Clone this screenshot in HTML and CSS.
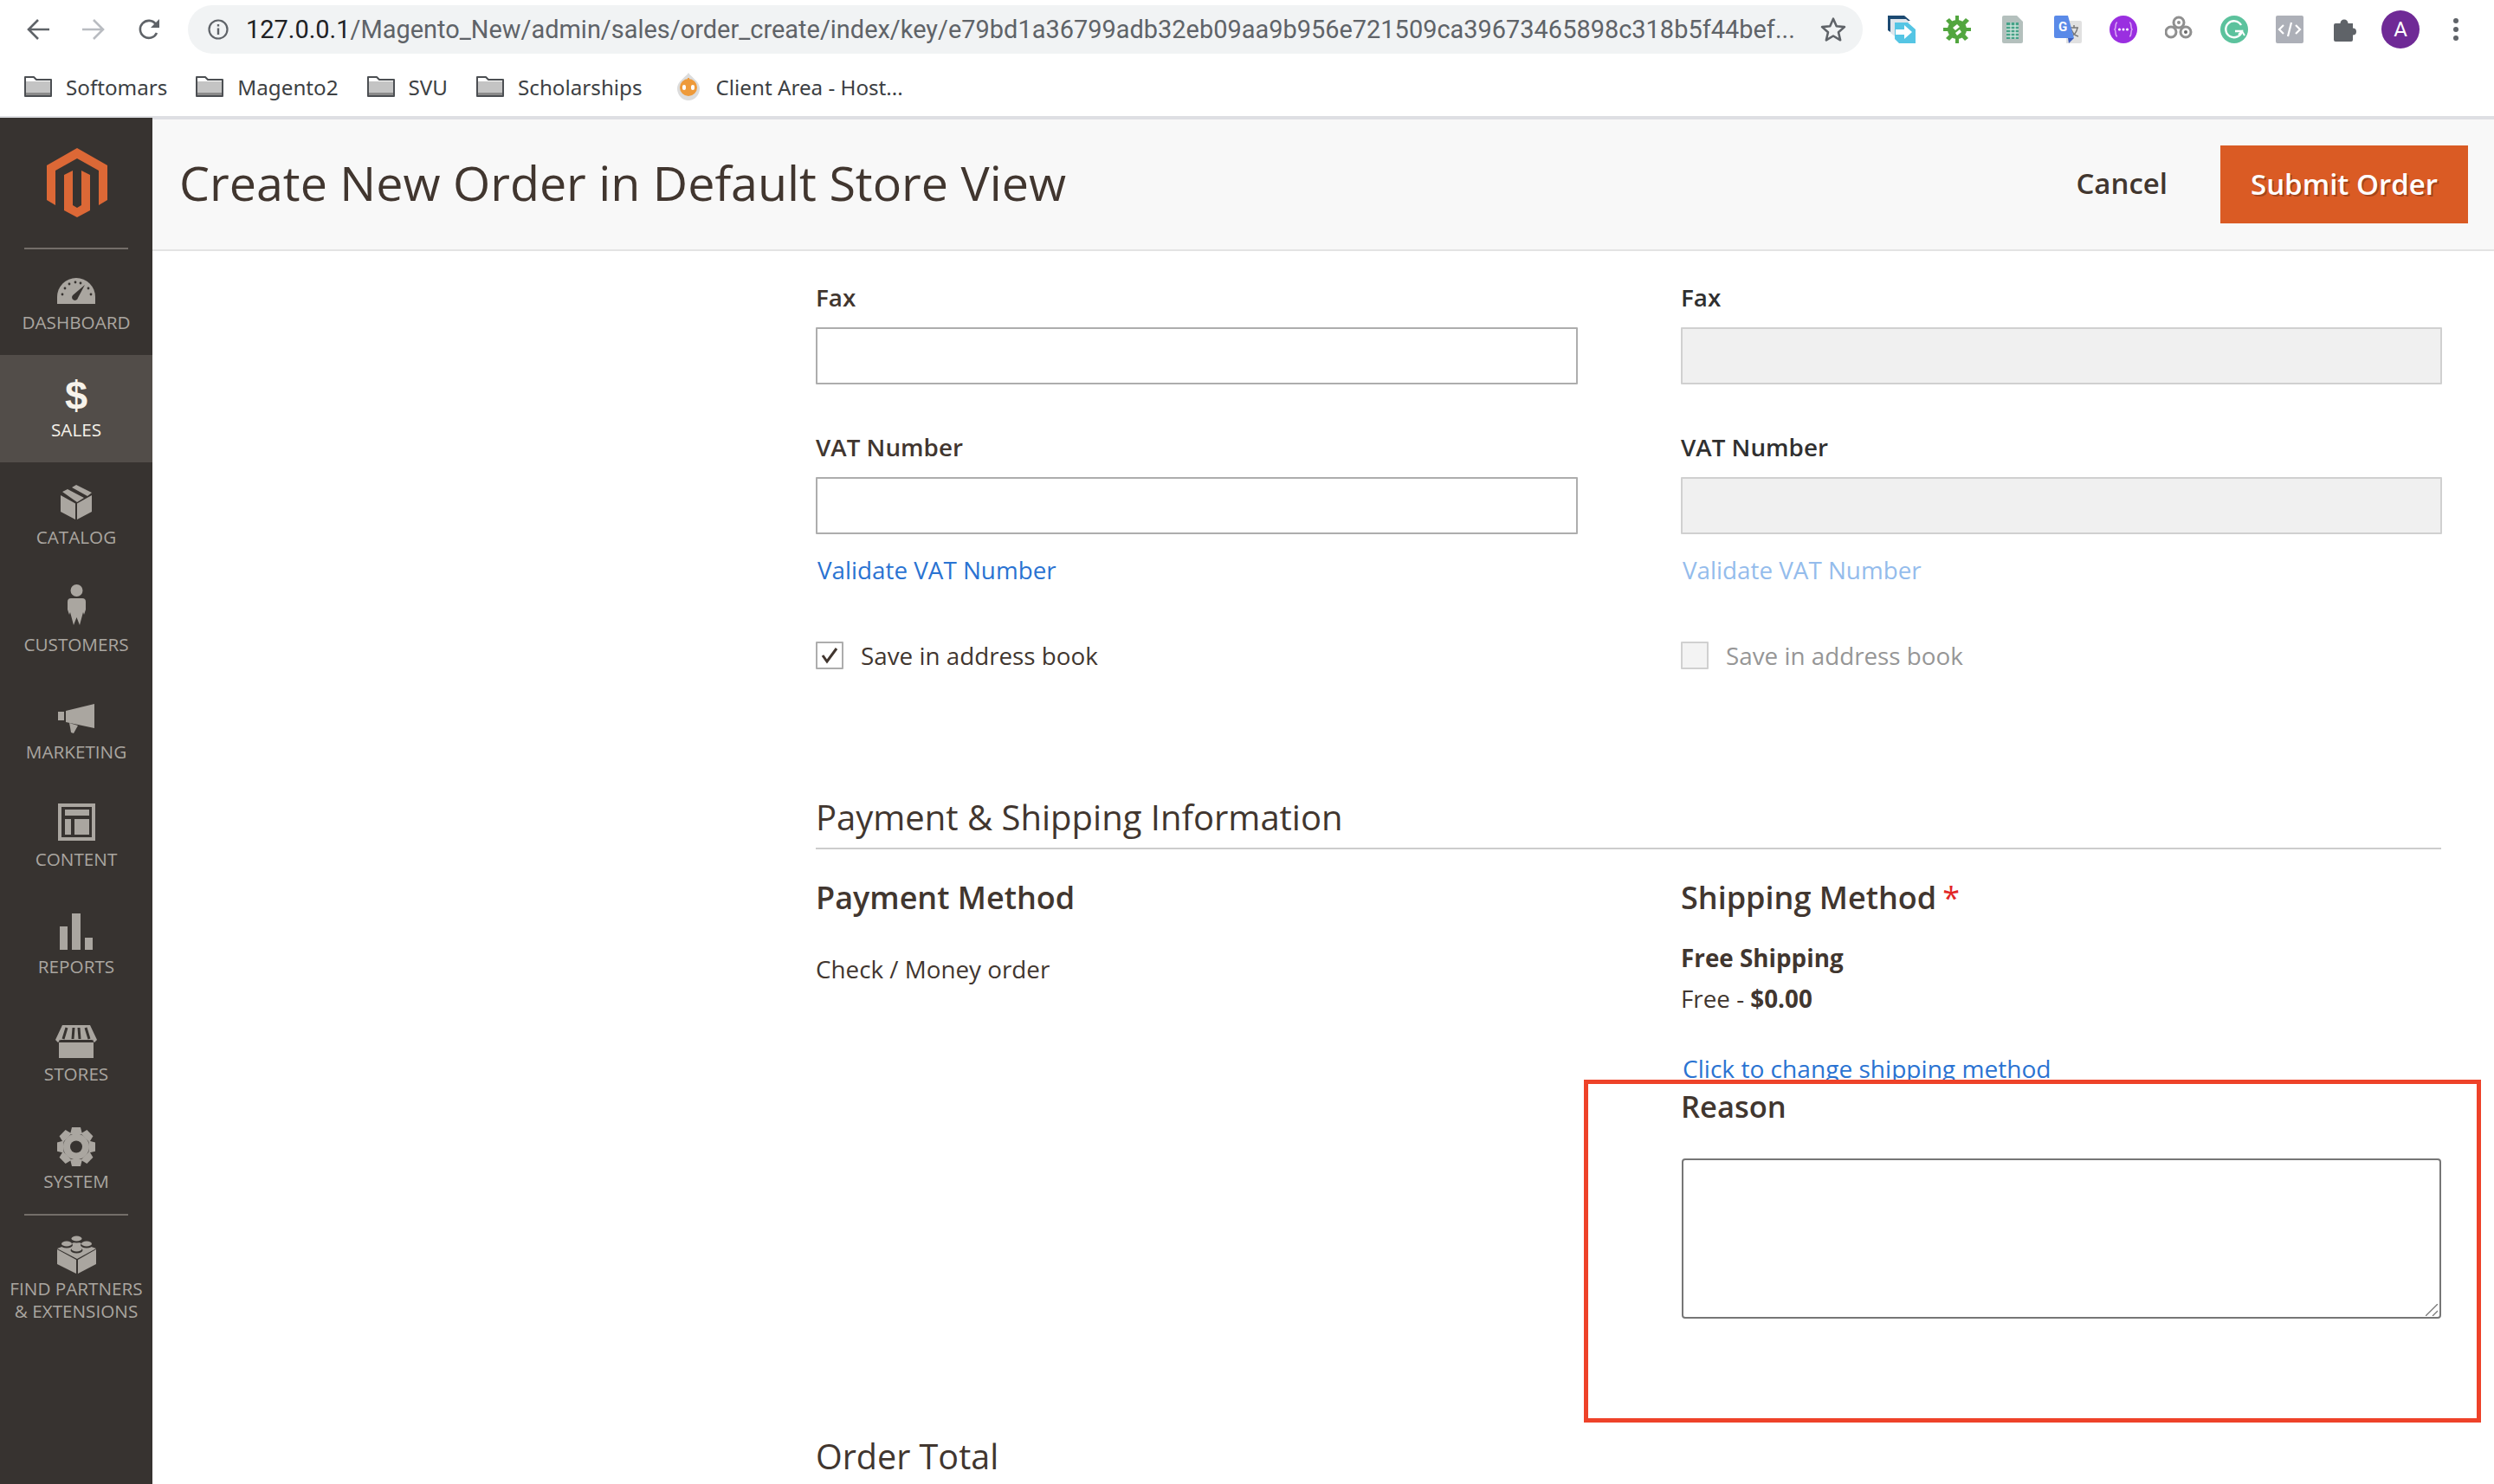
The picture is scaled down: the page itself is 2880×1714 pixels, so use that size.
FILE: index.html
```html
<!DOCTYPE html>
<html lang="en">
<head>
    <meta charset="UTF-8">
    <title>Create New Order in Default Store View</title>
    <link rel="stylesheet" href="styles.css">
</head>
<body>
    <div class="browser-bar">
        <div class="nav-buttons">
            <svg class="nav-icon" viewBox="0 0 26 24"><path d="M13 1 2 12l11 11M2 12h24" fill="none" stroke="#5f6368" stroke-width="2.6"/></svg>
            <svg class="nav-icon" viewBox="0 0 26 24"><path d="M13 1l11 11-11 11M24 12H0" fill="none" stroke="#b9bcc1" stroke-width="2.6"/></svg>
            <svg class="nav-icon" viewBox="0 0 26 24"><path d="M22 16a10 10 0 1 1-1-10" fill="none" stroke="#5f6368" stroke-width="2.6"/><path d="M25 0v10H15z" fill="#5f6368"/></svg>
        </div>
        <div class="url-bar">
            <svg class="info-icon" viewBox="0 0 24 24"><circle cx="12" cy="12" r="10.5" fill="none" stroke="#5f6368" stroke-width="2.2"/><path d="M12 10.5v7.5M12 6v2.6" stroke="#5f6368" stroke-width="2.4"/></svg>
            <div class="url-text"><span class="url-host">127.0.0.1</span>/Magento_New/admin/sales/order_create/index/key/e79bd1a36799adb32eb09aa9b956e721509ca39673465898c318b5f44bef...</div>
            <svg class="star-icon" viewBox="0 0 28 28"><path d="M14 2.5l3.5 8 8.6.8-6.5 5.7 2 8.5L14 21l-7.600 4.5 2-8.5L1.900 11.300l8.600-.8z" fill="none" stroke="#5f6368" stroke-width="2.4" stroke-linejoin="round"/></svg>
        </div>
        <div class="extensions">
            <svg class="ext" viewBox="0 0 32 32"><path d="M0 0h19l7 6H6v15l-6-4z" fill="#1c4a72"/><path d="M3 4h18l5 4H8v16l-5-4z" fill="#dfe6ec"/><path d="M8 8h15l9 8v16H13l-5-5z" fill="#55c5e4"/><path d="M9 16h10v-5l9 8-9 8v-5H9z" fill="#fff"/></svg>
            <svg class="ext" viewBox="0 0 32 32"><g fill="#52a63f"><circle cx="16" cy="16" r="11"/><path d="M14 0h4v32h-4zM0 14h32v4H0z"/><path d="M3 6l4-3 22 23-4 3zM3 26 26 3l4 3L7 29z"/></g><path d="M11 14l5-4 3 3-5 4zM14 20l5-4 2 3-5 4z" fill="#fff"/></svg>
            <svg class="ext ext-narrow" viewBox="0 0 24 32"><path d="M2 0h15l7 7v23a2 2 0 0 1-2 2H2a2 2 0 0 1-2-2V2a2 2 0 0 1 2-2z" fill="#b4c0bd"/><path d="M5 8h14v19H5z" fill="#45a287"/><path d="M5 12h14M5 16h14M5 20h14M5 24h14M10 8v19M15 8v19" stroke="#cfe3dc" stroke-width="1.3"/></svg>
            <svg class="ext" viewBox="0 0 32 32"><path d="M14 6h16a2 2 0 0 1 2 2v22a2 2 0 0 1-2 2H14z" fill="#e1e1e1"/><path d="M18 14h10M23 11v3M27 14c-1 6-5 9-8 10M20 16c1 4 4 7 8 8" fill="none" stroke="#777" stroke-width="1.5"/><path d="M2 0h14l7 26H2a2 2 0 0 1-2-2V2a2 2 0 0 1 2-2z" fill="#5a8ae8"/><path d="M16 26h7l-6 6z" fill="#3f5fbe"/><text class="ext-g" x="5" y="18">G</text></svg>
            <svg class="ext" viewBox="0 0 32 32"><circle cx="16" cy="16" r="16" fill="#9a2fe0"/><path d="M9 8c-3 0-1 6-3 8 2 2 0 8 3 8M23 8c3 0 1 6 3 8-2 2 0 8-3 8" fill="none" stroke="#d9a8f5" stroke-width="1.5"/><circle cx="11.5" cy="16" r="1.5" fill="#fff"/><circle cx="16" cy="16" r="1.5" fill="#fff"/><circle cx="20.5" cy="16" r="1.5" fill="#fff"/></svg>
            <svg class="ext" viewBox="0 0 32 32"><g fill="none" stroke="#8f8f8f" stroke-width="3"><circle cx="16" cy="8" r="6"/><circle cx="7" cy="19" r="6"/><circle cx="24" cy="19" r="6"/></g><circle cx="16" cy="8" r="2" fill="#8f8f8f"/><circle cx="24" cy="19" r="2" fill="#666"/></svg>
            <svg class="ext" viewBox="0 0 32 32"><circle cx="16" cy="16" r="16" fill="#5cc29d"/><path d="M24 11a9.5 9.5 0 1 0 1 7h-8" fill="none" stroke="#fff" stroke-width="2.4"/><path d="M21 22l4-4 3 5" fill="none" stroke="#fff" stroke-width="2"/></svg>
            <svg class="ext" viewBox="0 0 32 32"><rect width="32" height="32" rx="2" fill="#adb0b8"/><path d="M9 11l-5 5 5 5M23 11l5 5-5 5M18 8l-4 16" fill="none" stroke="#fff" stroke-width="2.2"/></svg>
            <svg class="ext-puzzle" viewBox="0 0 28 28"><path d="M2 7h5.500a4.500 4.500 0 1 1 9 0H22v5.500a4 4 0 1 1 0 8V26a2 2 0 0 1-2 2H2a2 2 0 0 1-2-2V9a2 2 0 0 1 2-2z" fill="#5f6368"/></svg>
            <div class="avatar">A</div>
            <div class="kebab"><i></i><i></i><i></i></div>
        </div>
    </div>

    <div class="bookmarks">
        <a class="bookmark"><svg class="folder" viewBox="0 0 32 26"><path d="M1 24V2h10l3 3h17v19z" fill="#fff" stroke="#4c4f53" stroke-width="2" stroke-linejoin="round"/><path d="M2 7h28v16H2z" fill="#c4c4c4"/><path d="M2 20h28v3H2z" fill="#8b8b8b"/></svg>Softomars</a>
        <a class="bookmark"><svg class="folder" viewBox="0 0 32 26"><path d="M1 24V2h10l3 3h17v19z" fill="#fff" stroke="#4c4f53" stroke-width="2" stroke-linejoin="round"/><path d="M2 7h28v16H2z" fill="#c4c4c4"/><path d="M2 20h28v3H2z" fill="#8b8b8b"/></svg>Magento2</a>
        <a class="bookmark"><svg class="folder" viewBox="0 0 32 26"><path d="M1 24V2h10l3 3h17v19z" fill="#fff" stroke="#4c4f53" stroke-width="2" stroke-linejoin="round"/><path d="M2 7h28v16H2z" fill="#c4c4c4"/><path d="M2 20h28v3H2z" fill="#8b8b8b"/></svg>SVU</a>
        <a class="bookmark"><svg class="folder" viewBox="0 0 32 26"><path d="M1 24V2h10l3 3h17v19z" fill="#fff" stroke="#4c4f53" stroke-width="2" stroke-linejoin="round"/><path d="M2 7h28v16H2z" fill="#c4c4c4"/><path d="M2 20h28v3H2z" fill="#8b8b8b"/></svg>Scholarships</a>
        <a class="bookmark bookmark-site"><svg class="robot" viewBox="0 0 28 32"><path d="M14 0c3 5 13 10 13 18 0 8-6 14-13 14S1 26 1 18C1 10 11 5 14 0z" fill="#dcdcdc"/><circle cx="14" cy="17" r="10" fill="#ee9a3a"/><rect x="7" y="14" width="4" height="6" rx="2" fill="#fff"/><rect x="17" y="14" width="4" height="6" rx="2" fill="#fff"/><path d="M14 6v6" stroke="#ee9a3a" stroke-width="2"/></svg>Client Area - Host...</a>
    </div>

    <div class="admin">
        <nav class="sidebar">
            <div class="logo">
                <svg class="logo-mark" viewBox="0 0 70 80"><path d="M35 0l35 20v40l-10 6V26L35 12 10 26v40L0 60V20z" fill="#dc6836"/><path d="M20 31l10-5v40l5 3 5-3V26l10 5v41l-15 8-15-8z" fill="#dc6836"/></svg>
            </div>
            <ul class="menu">
                <li class="menu-item">
                    <div class="menu-icon lift-4"><svg width="44" height="30" viewBox="0 0 44 30"><path d="M0 30v-8a22 22 0 0 1 44 0v8z" fill="currentColor"/><path d="M32 8l-8 15a3.5 3.5 0 1 1-6-3z" fill="#373330"/><g fill="#373330"><circle cx="6" cy="19" r="1.4"/><circle cx="9" cy="12" r="1.4"/><circle cx="14" cy="7" r="1.4"/><circle cx="21" cy="5" r="1.4"/><circle cx="27" cy="6" r="1.4"/><circle cx="36" cy="12" r="1.4"/><circle cx="39" cy="19" r="1.4"/></g></svg></div>
                    <span>Dashboard</span>
                </li>
                <li class="menu-item is-active">
                    <div class="menu-icon"><span class="dollar">$</span></div>
                    <span>Sales</span>
                </li>
                <li class="menu-item">
                    <div class="menu-icon lift-3"><svg width="36" height="40" viewBox="0 0 36 40"><path d="M0 12l17 9.5V40L0 31zM36 12 19 21.5V40l17-9zM13 3l5-3 18 9-5 4zM2 8l6-3 19 10-8 5z" fill="currentColor"/></svg></div>
                    <span>Catalog</span>
                </li>
                <li class="menu-item">
                    <div class="menu-icon lift-5"><svg width="21" height="47" viewBox="0 0 21 47"><circle cx="10.5" cy="7" r="7" fill="currentColor"/><path d="M4 16h13q4 0 4 4v9l-2 6-1-3-4 15-3.5-9L7 47 3 32l-1 3-2-6v-9q0-4 4-4z" fill="currentColor"/></svg></div>
                    <span>Customers</span>
                </li>
                <li class="menu-item">
                    <div class="menu-icon lift-4"><svg width="42" height="34" viewBox="0 0 42 34"><path d="M0 9h7v10H0zM9 8l33-8v28L9 21zM13 22l10 3-5 9-3-1-1-6z" fill="currentColor"/></svg></div>
                    <span>Marketing</span>
                </li>
                <li class="menu-item">
                    <div class="menu-icon lift-4"><svg width="43" height="43" viewBox="0 0 43 43"><path d="M2 2h39v39H2z" fill="none" stroke="currentColor" stroke-width="4"/><path d="M8 7h28v7H8zM8 18h7v18H8zM19 18h17v18H19z" fill="currentColor"/></svg></div>
                    <span>Content</span>
                </li>
                <li class="menu-item">
                    <div class="menu-icon lift-2"><svg width="38" height="42" viewBox="0 0 38 42"><path d="M0 15h9v27H0zM14 0h10v42H14zM29 28h9v14h-9z" fill="currentColor"/></svg></div>
                    <span>Reports</span>
                </li>
                <li class="menu-item">
                    <div class="menu-icon lift-1"><svg width="48" height="38" viewBox="0 0 48 38"><path d="M8 0h32l8 17-3 3-3-3H6l-3 3-3-3z" fill="currentColor"/><path d="M4 20h40v18H4z" fill="currentColor"/><path d="M13 3l-4 13M21 3l-1 13M27 3l1 13M35 3l4 13" stroke="#373330" stroke-width="3"/><path d="M4 18h40" stroke="#373330" stroke-width="1"/></svg></div>
                    <span>Stores</span>
                </li>
                <li class="menu-item">
                    <div class="menu-icon"><svg width="44" height="45" viewBox="0 0 44 45"><g fill="currentColor"><circle cx="22" cy="22.5" r="15"/><path d="M17 0h10l2 8H15z"/><path d="M17 0h10l2 8H15z" transform="rotate(45 22 22.5)"/><path d="M17 0h10l2 8H15z" transform="rotate(90 22 22.5)"/><path d="M17 0h10l2 8H15z" transform="rotate(135 22 22.5)"/><path d="M17 0h10l2 8H15z" transform="rotate(180 22 22.5)"/><path d="M17 0h10l2 8H15z" transform="rotate(225 22 22.5)"/><path d="M17 0h10l2 8H15z" transform="rotate(270 22 22.5)"/><path d="M17 0h10l2 8H15z" transform="rotate(315 22 22.5)"/></g><circle cx="22" cy="22.5" r="7" fill="#373330"/></svg></div>
                    <span>System</span>
                </li>
                <li class="menu-item menu-item-partners">
                    <div class="menu-icon"><svg width="45" height="44" viewBox="0 0 45 44"><path d="M0 16l22 12v16L0 33zM45 16 24 28v16l21-11z" fill="currentColor"/><path d="M22.5 7 45 15 23 27 0 15z" fill="currentColor"/><g fill="#373330"><ellipse cx="22.5" cy="5" rx="7" ry="3.5"/><ellipse cx="11" cy="11" rx="7" ry="3.5"/><ellipse cx="34" cy="11" rx="7" ry="3.5"/><ellipse cx="22.5" cy="17" rx="7" ry="3.5"/></g><g fill="currentColor"><ellipse cx="22.5" cy="3.5" rx="6" ry="3"/><ellipse cx="11" cy="9.5" rx="6" ry="3"/><ellipse cx="34" cy="9.5" rx="6" ry="3"/><ellipse cx="22.5" cy="15.5" rx="6" ry="3"/></g></svg></div>
                    <span>Find Partners<br>&amp; Extensions</span>
                </li>
            </ul>
        </nav>

        <main class="page">
            <header class="page-header">
                <h1>Create New Order in Default Store View</h1>
                <div class="page-actions">
                    <button class="btn-cancel">Cancel</button>
                    <button class="btn-submit">Submit Order</button>
                </div>
            </header>

            <div class="content">
                <div class="two-cols">
                    <div class="address">
                        <div class="field">
                            <label>Fax</label>
                            <input type="text">
                        </div>
                        <div class="field">
                            <label>VAT Number</label>
                            <input type="text">
                        </div>
                        <a class="link validate">Validate VAT Number</a>
                        <div class="save-row">
                            <span class="check"><svg width="22" height="20" viewBox="0 0 22 20"><path d="M3 10l5 7L19 2" fill="none" stroke="#41362f" stroke-width="3"/></svg></span>
                            Save in address book
                        </div>
                    </div>
                    <div class="address is-disabled">
                        <div class="field">
                            <label>Fax</label>
                            <input type="text" disabled>
                        </div>
                        <div class="field">
                            <label>VAT Number</label>
                            <input type="text" disabled>
                        </div>
                        <a class="link validate">Validate VAT Number</a>
                        <div class="save-row">
                            <span class="check"></span>
                            Save in address book
                        </div>
                    </div>
                </div>

                <h2 class="section-title">Payment &amp; Shipping Information</h2>

                <div class="two-cols">
                    <div>
                        <h3 class="sub-title">Payment Method</h3>
                        <p class="payment-name">Check / Money order</p>
                    </div>
                    <div>
                        <h3 class="sub-title">Shipping Method<span class="required">*</span></h3>
                        <p class="ship-name">Free Shipping</p>
                        <p class="ship-price">Free - <b>$0.00</b></p>
                        <a class="link change-link">Click to change shipping method</a>
                        <div class="reason-box">
                            <label class="reason-label">Reason</label>
                            <div class="reason-wrap">
                                <textarea class="reason-input"></textarea>
                                <svg class="reason-grip" viewBox="0 0 14 14"><path d="M0 14 14 0M8 14l6-6" stroke="#767676" stroke-width="1.3"/></svg>
                            </div>
                        </div>
                    </div>
                </div>

                <h2 class="section-title order-total">Order Total</h2>
            </div>
        </main>
    </div>
</body>
</html>
```

FILE: styles.css
```css
* {
    box-sizing: border-box;
}

html, body {
    height: 1714px;
    overflow: hidden;
}

body {
    margin: 0;
    font-family: 'Open Sans', sans-serif;
    font-size: 27.8px;
    color: #41362f;
    background: #fff;
}

/* browser chrome */
.browser-bar {
    height: 70px;
    display: flex;
    align-items: flex-start;
    padding-top: 6px;
}

.nav-buttons {
    width: 217px;
    height: 56px;
    display: flex;
    align-items: center;
    gap: 38px;
    padding-left: 31px;
}

.nav-icon {
    width: 26px;
    height: 24px;
}

.url-bar {
    width: 1934px;
    height: 56px;
    background: #f1f3f4;
    border-radius: 28px;
    display: flex;
    align-items: center;
    padding-left: 23px;
}

.info-icon {
    width: 24px;
    height: 24px;
    flex: none;
}

.url-text {
    width: 1792px;
    margin-left: 20px;
    font-family: 'Roboto', sans-serif;
    font-size: 28.95px;
    color: #5f6368;
    white-space: nowrap;
    overflow: hidden;
}

.url-host {
    color: #202124;
}

.star-icon {
    width: 30px;
    height: 30px;
    margin-left: 26px;
    flex: none;
}

.extensions {
    display: flex;
    align-items: center;
    height: 56px;
    padding-left: 29px;
    gap: 32px;
}

.ext {
    width: 32px;
    height: 32px;
    flex: none;
}

.ext-narrow {
    width: 24px;
    margin: 0 4px;
}

.ext-g {
    font-family: 'Roboto', sans-serif;
    font-size: 15px;
    font-weight: 700;
    fill: #fff;
}

.ext-puzzle {
    width: 28px;
    height: 28px;
    margin-left: 3px;
}

.avatar {
    width: 44px;
    height: 44px;
    margin-left: -5px;
    border-radius: 50%;
    background: #6f2a96;
    color: #fff;
    font-family: 'Roboto', sans-serif;
    font-size: 24px;
    display: flex;
    align-items: center;
    justify-content: center;
}

.kebab {
    display: flex;
    flex-direction: column;
    gap: 4px;
    margin-left: 7px;
}

.kebab i {
    width: 6px;
    height: 6px;
    border-radius: 50%;
    background: #5f6368;
}

.bookmarks {
    height: 64px;
    padding: 0 0 4px 28px;
    display: flex;
    align-items: center;
    gap: 33px;
    font-family: 'Noto Sans', sans-serif;
    font-size: 24.2px;
    color: #3c4043;
}

.bookmark {
    display: flex;
    align-items: center;
    gap: 16px;
    white-space: nowrap;
}

.bookmark-site {
    margin-left: 6px;
    gap: 18px;
}

.folder {
    width: 32px;
    height: 26px;
}

.robot {
    width: 28px;
    height: 32px;
}

/* admin layout */
.admin {
    display: flex;
    height: 1580px;
    border-top: 2px solid #dedfe3;
}

.sidebar {
    width: 176px;
    flex: none;
    background: #373330;
}

.logo {
    height: 150px;
    padding: 35px 0 0 2px;
    display: flex;
    justify-content: center;
}

.logo-mark {
    width: 70px;
    height: 80px;
}

.menu {
    list-style: none;
    margin: 0;
    padding: 0;
}

.menu-item {
    height: 124px;
    color: #aaa6a0;
    text-align: center;
    font-size: 20.7px;
    line-height: 26px;
    text-transform: uppercase;
    position: relative;
}

.menu-item:first-child::before,
.menu-item-partners::before {
    content: "";
    position: absolute;
    left: 28px;
    right: 28px;
    top: 0;
    height: 2px;
    background: #736e69;
}

.menu-item.is-active {
    background: #524d49;
    color: #f7f3eb;
}

.menu-icon {
    height: 69px;
    margin-bottom: 4px;
    display: flex;
    align-items: flex-end;
    justify-content: center;
}

.lift-1 { padding-bottom: 1px; }
.lift-2 { padding-bottom: 2px; }
.lift-3 { padding-bottom: 3px; }
.lift-4 { padding-bottom: 4px; }
.lift-5 { padding-bottom: 5px; }

.dollar {
    font-family: 'Liberation Sans', sans-serif;
    font-weight: 700;
    font-size: 47px;
    line-height: 47px;
    margin-bottom: -1px;
}

/* page */
.page {
    flex: 1;
    min-width: 0;
}

.page-header {
    height: 154px;
    background: #f8f8f8;
    border-top: 2px solid #dedfe3;
    border-bottom: 2px solid #e3e3e3;
    display: flex;
    align-items: center;
    justify-content: space-between;
    padding: 0 30px 0 31px;
}

h1 {
    margin: 0 0 6px;
    font-size: 55.6px;
    font-weight: 400;
}

.page-actions {
    display: flex;
    align-items: center;
    gap: 61px;
}

button {
    font-family: inherit;
    border: 0;
    cursor: pointer;
}

.btn-cancel {
    background: none;
    padding: 0 0 3px;
    font-size: 33px;
    font-weight: 600;
    color: #41362f;
}

.btn-submit {
    width: 286px;
    height: 90px;
    padding-bottom: 3px;
    background: #da5b24;
    color: #fff;
    font-size: 33px;
    font-weight: 600;
    text-shadow: 2px 2px 0 rgba(0, 0, 0, 0.25);
}

.content {
    padding: 33px 0 0 766px;
}

.two-cols {
    display: grid;
    grid-template-columns: 880px 879px;
    column-gap: 119px;
}

.field + .field {
    margin-top: 52px;
}

.field label {
    display: block;
    height: 40px;
    line-height: 40px;
    font-weight: 600;
    margin-bottom: 15px;
}

.field input {
    display: block;
    width: 100%;
    height: 66px;
    border: 2px solid #adadad;
    background: #fff;
    border-radius: 1px;
}

.is-disabled .field input {
    background: #f0f0f0;
    border-color: #d0d0d0;
}

.link {
    display: block;
    line-height: 40px;
    padding-left: 2px;
    color: #2a73d2;
}

.validate {
    margin-top: 21px;
}

.save-row {
    display: flex;
    align-items: center;
    gap: 20px;
    margin-top: 63px;
    height: 32px;
    color: #41362f;
}

.check {
    width: 32px;
    height: 32px;
    border: 2px solid #adadad;
    border-radius: 1px;
    display: flex;
    align-items: center;
    justify-content: center;
}

.is-disabled label {
    color: #303030;
}

.is-disabled .link {
    color: #94bcec;
}

.is-disabled .save-row {
    color: #969696;
}

.is-disabled .check {
    background: #f3f3f3;
    border-color: #d0d0d0;
}

.section-title {
    margin: 143px 0 0;
    width: 1877px;
    height: 65px;
    line-height: 56px;
    font-size: 40px;
    font-weight: 400;
    border-bottom: 2px solid #cccccc;
}

.sub-title {
    margin: 32px 0 0;
    font-size: 36px;
    line-height: 48px;
    font-weight: 600;
}

.required {
    color: #e22626;
    margin-left: 7px;
    font-weight: 400;
}

.payment-name {
    margin: 38px 0 0;
    line-height: 40px;
}

.ship-name {
    margin: 26px 0 0;
    line-height: 38px;
    font-weight: 700;
}

.ship-price {
    margin: 9px 0 0;
    line-height: 38px;
}

.change-link {
    margin-top: 42px;
    font-size: 28.1px;
}

/* red annotation box, paints over the link above it */
.reason-box {
    position: relative;
    width: 1036px;
    height: 396px;
    margin: -7px 0 0 -112px;
    padding: 0 0 0 108px;
    background: #fff;
    border: 5px solid #ee4229;
}

.reason-label {
    display: block;
    margin: 2px 0 0 -1px;
    font-size: 34.5px;
    font-weight: 600;
    line-height: 48px;
}

.reason-wrap {
    position: relative;
    width: 877px;
    height: 185px;
    margin-top: 36px;
}

.reason-input {
    display: block;
    width: 100%;
    height: 100%;
    resize: none;
    background: #fff;
    border: 2px solid #767676;
    border-radius: 4px;
}

.reason-grip {
    position: absolute;
    right: 4px;
    bottom: 3px;
    width: 14px;
    height: 14px;
}

.order-total {
    margin-top: 11px;
    font-size: 39.5px;
    border: 0;
}
```
